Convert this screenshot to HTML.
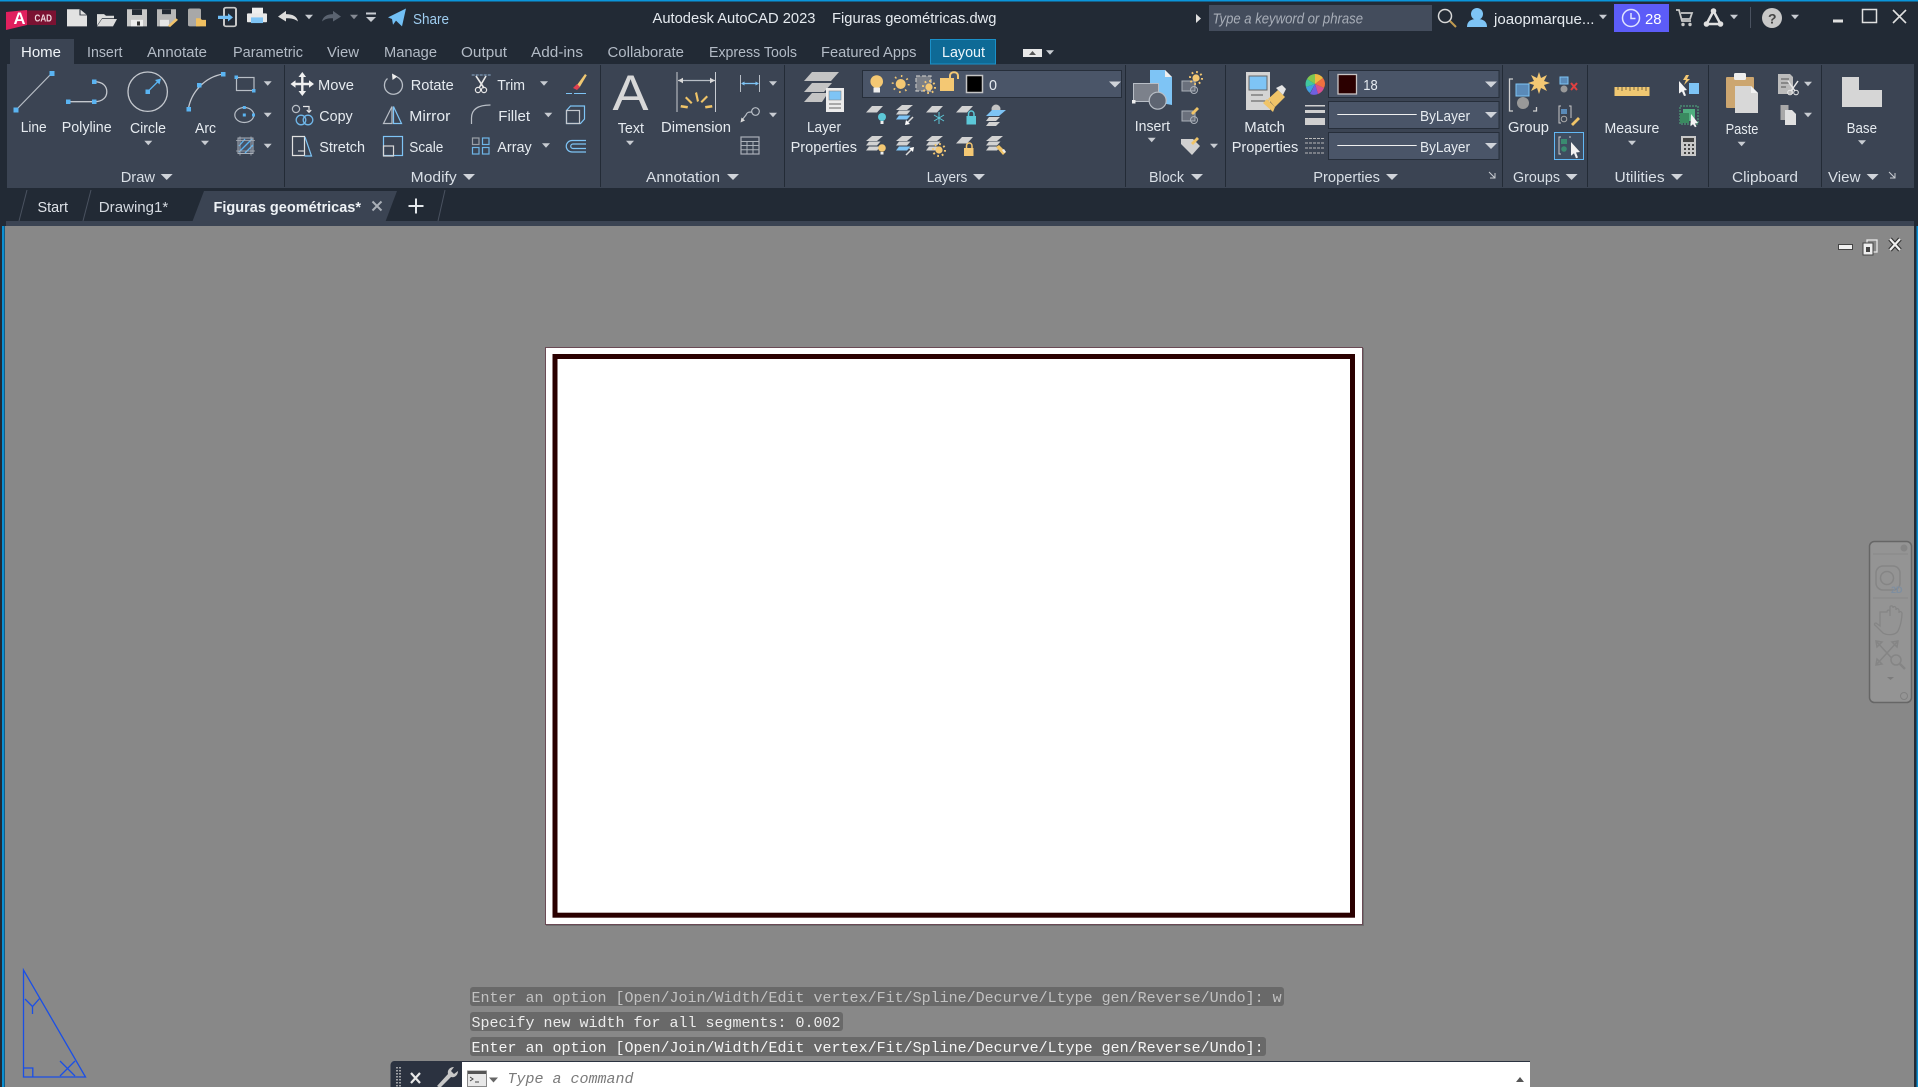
<!DOCTYPE html>
<html lang="en"><head><meta charset="utf-8"><title>Autodesk AutoCAD 2023 - Figuras geométricas.dwg</title>
<style>
html,body{margin:0;padding:0;background:#888;width:1918px;height:1087px;overflow:hidden}
svg{display:block}
text{font-family:"Liberation Sans",sans-serif;font-size:15px;fill:#e6ebf0}
.t{fill:#b3bbc6}
.m{font-family:"Liberation Mono",monospace;font-size:15px}
.p{fill:#d9dfe6}
</style></head><body>
<svg xmlns="http://www.w3.org/2000/svg" width="1918" height="1087" viewBox="0 0 1918 1087">
<defs>
<path id="c" d="M-4-2.2h8L0 2.2z" fill="#c8ccd2"/>
<path id="cb" d="M-6-3h12L0 3z" fill="#d0d4da"/>
<g id="slab"><path d="M6 0H17L11 6.5H0z" fill="#d2d2d2"/></g>
<g id="stack"><path d="M6 0H17L11 5H0z" fill="#d2d2d2"/><path d="M3 5.5H14.500L11 9.500H0z" fill="#d2d2d2"/><path d="M3 10.500H14.500L11 14.500H0z" fill="#d2d2d2"/></g>
<g id="stackb"><path d="M6 0H17L11 5H0z" fill="#d2d2d2"/><path d="M3 5.500H14.500L11 9.500H0z" fill="#d2d2d2"/><path d="M3 10.500H14.500L11 14.500H0z" fill="#7ec4f5"/></g>
<g id="sun"><circle r="3.600" fill="#f4c873"/><circle r="6" fill="none" stroke="#f4c873" stroke-width="2" stroke-dasharray="1.800 2.900"/></g>
</defs>

<!-- base -->
<rect width="1918" height="1087" fill="#888888"/>
<rect width="1918" height="226" fill="#222a35"/>
<rect x="0" y="0" width="1918" height="1.500" fill="#0a96dc"/>
<rect x="0" y="226" width="5" height="861" fill="#222a35"/>
<rect x="2" y="226" width="2.500" height="861" fill="#0a8fd2"/>
<rect x="1914" y="226" width="4" height="861" fill="#222a35"/>
<rect x="1916.500" y="226" width="1.500" height="861" fill="#0a8fd2"/>
<rect x="6" y="221" width="1908" height="5" fill="#3b4453"/>
<rect x="7" y="64" width="1907" height="124" fill="#3b4453"/>

<!-- logo -->
<path d="M6 12l21-2v15L6 30z" fill="#e0205e"/>
<text x="13.500" y="24" textLength="12" lengthAdjust="spacingAndGlyphs" style="font-size:17px;font-weight:bold;fill:#fff">A</text>
<rect x="27" y="10.500" width="29" height="14.500" fill="#7b1232"/>
<text x="34.500" y="21.500" textLength="17.500" lengthAdjust="spacingAndGlyphs" style="font-size:10.500px;font-weight:bold;fill:#f0d8de">CAD</text>

<!-- QAT -->
<g transform="translate(0 .4) scale(1 .81)">
<path d="M67 11h13l7 7v14H67z" fill="#e2e2e2"/><path d="M80 11v7h7" fill="none" stroke="#222a35"/>
<path d="M97 17h7l2 2h8v3h-12l-5 9zM102 23h15l-4 9H97z" fill="#dcdcdc"/>
<path d="M127 11h20v21h-20z" fill="#c8c8c8"/><rect x="132" y="11" width="10" height="7" fill="#222a35"/><rect x="131" y="24" width="12" height="8" fill="#eee"/><rect x="137" y="26" width="3" height="5" fill="#333"/>
<path d="M157 11h19v14l-6 7h-13z" fill="#b8b8b8"/><rect x="162" y="11" width="9" height="6" fill="#222a35"/><rect x="160" y="24" width="9" height="8" fill="#e6e6e6"/><path d="M168 31l8-9 2 2-8 9z" fill="#f2c46b"/>
<rect x="188" y="10" width="13" height="22" rx="2" fill="#a8a8a8"/><path d="M196 22h4l2 2h4v8h-10z" fill="#f0bf60"/>
<rect x="224" y="9" width="12" height="23" rx="2" fill="none" stroke="#c8c8c8" stroke-width="2"/><path d="M218 19h10v-3l5 5-5 5v-3h-10z" fill="#6fbdf5"/>
<rect x="252" y="9" width="11" height="8" fill="#eee"/><rect x="247" y="16" width="20" height="11" rx="1" fill="#e8e8e8"/><rect x="251" y="21" width="12" height="7" fill="#7ec4f5"/>
<path d="M278 20l8-7v4c7 0 11 3 12 9-3-3-6-4-12-4v4z" fill="#dcdcdc"/>
<path d="M341 20l-8-7v4c-6 0-10 3-11 9 3-3 5-4 11-4v4z" fill="#5a6370"/>
<path d="M388 21l18-11-4 22-6-7-3 5-1-7z" fill="#72c0f5"/>
</g>
<use href="#c" x="309" y="17"/>
<use href="#c" x="354" y="17" opacity=".6"/>
<rect x="366" y="12.500" width="10" height="2" fill="#c8ccd2"/><path d="M366 17h10l-5 5z" fill="#c8ccd2"/>
<text x="413" y="24" textLength="36" lengthAdjust="spacingAndGlyphs" style="fill:#9fcdf0">Share</text>

<!-- title -->
<text x="652.500" y="23" textLength="163" lengthAdjust="spacingAndGlyphs">Autodesk AutoCAD 2023</text>
<text x="832" y="23" textLength="164.500" lengthAdjust="spacingAndGlyphs">Figuras geométricas.dwg</text>
<path d="M1196 14l5 4.500-5 4.500z" fill="#e0e0e0"/>
<rect x="1209" y="5" width="223" height="26" fill="#434c5c"/>
<text x="1212.500" y="23.500" textLength="150.500" lengthAdjust="spacingAndGlyphs" style="font-style:italic;fill:#a8aeb8">Type a keyword or phrase</text>
<circle cx="1445" cy="16" r="6.500" fill="none" stroke="#d8d8d8" stroke-width="1.500"/><path d="M1450 21l6 6" stroke="#c09a50" stroke-width="2"/>
<circle cx="1477" cy="14" r="6" fill="#7ec4f5"/><path d="M1467 27c0-6 4-8 10-8s10 2 10 8z" fill="#7ec4f5"/>
<text x="1494" y="24" textLength="100.500" lengthAdjust="spacingAndGlyphs">joaopmarque...</text>
<use href="#c" x="1603" y="17"/>
<rect x="1614" y="4" width="55" height="28" fill="#5c5cf8"/>
<circle cx="1631" cy="18" r="8.500" fill="none" stroke="#e0e4ff" stroke-width="1.500"/><path d="M1631 13v5.500h4.500" fill="none" stroke="#e0e4ff" stroke-width="1.500"/>
<text x="1645" y="24" textLength="16.500" lengthAdjust="spacingAndGlyphs" style="fill:#fff">28</text>
<path d="M1676 10h3l3 11h9M1681 13h11l-2 6h-8" fill="none" stroke="#c8c8c8" stroke-width="1.800"/><circle cx="1683" cy="24.500" r="1.700" fill="#c8c8c8"/><circle cx="1690" cy="24.500" r="1.700" fill="#c8c8c8"/>
<path d="M1713.500 11l-7 13h14z" fill="none" stroke="#e0e0e0" stroke-width="2.500"/><circle cx="1713.500" cy="11" r="2.800" fill="#e0e0e0"/><circle cx="1706.500" cy="24" r="2.800" fill="#e0e0e0"/><circle cx="1720.500" cy="24" r="2.800" fill="#e0e0e0"/>
<use href="#c" x="1734" y="17"/>
<rect x="1750" y="7" width="1" height="21" fill="#4a5260"/>
<circle cx="1772" cy="18" r="10" fill="#c8c8c8"/><text x="1768" y="23.500" style="font-weight:bold;font-size:14px;fill:#444">?</text>
<use href="#c" x="1795" y="17"/>
<rect x="1833" y="19.500" width="10" height="3" fill="#e0e0e0"/>
<rect x="1862.500" y="9.500" width="14" height="13" fill="none" stroke="#e0e0e0" stroke-width="1.500"/>
<path d="M1893 10l13 13M1906 10l-13 13" stroke="#e0e0e0" stroke-width="1.600"/>

<!-- ribbon tabs -->
<rect x="10" y="39" width="64" height="25" fill="#3b4453"/>
<text x="21" y="57" textLength="40" lengthAdjust="spacingAndGlyphs" style="fill:#f0f4f8">Home</text>
<text class="t" x="87" y="57" textLength="35.500" lengthAdjust="spacingAndGlyphs">Insert</text>
<text class="t" x="147" y="57" textLength="60" lengthAdjust="spacingAndGlyphs">Annotate</text>
<text class="t" x="233" y="57" textLength="70" lengthAdjust="spacingAndGlyphs">Parametric</text>
<text class="t" x="327" y="57" textLength="32" lengthAdjust="spacingAndGlyphs">View</text>
<text class="t" x="384" y="57" textLength="53" lengthAdjust="spacingAndGlyphs">Manage</text>
<text class="t" x="461" y="57" textLength="46" lengthAdjust="spacingAndGlyphs">Output</text>
<text class="t" x="531" y="57" textLength="52" lengthAdjust="spacingAndGlyphs">Add-ins</text>
<text class="t" x="607.500" y="57" textLength="76.500" lengthAdjust="spacingAndGlyphs">Collaborate</text>
<text class="t" x="709" y="57" textLength="88" lengthAdjust="spacingAndGlyphs">Express Tools</text>
<text class="t" x="821" y="57" textLength="95.500" lengthAdjust="spacingAndGlyphs">Featured Apps</text>
<rect x="930.500" y="39.500" width="65" height="24.500" fill="#0e6a96" stroke="#1a90c8"/>
<text x="942" y="57" textLength="43" lengthAdjust="spacingAndGlyphs" style="fill:#eef6fb">Layout</text>
<rect x="1023" y="49" width="19" height="8" fill="#e8e8e8"/><path d="M1029 55l3.500-4 3.500 4z" fill="#555"/>
<use href="#c" x="1050" y="52.500"/>

<!-- separators -->
<g fill="#232b36">
<rect x="284" y="65" width="1" height="122"/><rect x="600" y="65" width="1" height="122"/><rect x="784" y="65" width="1" height="122"/><rect x="1125" y="65" width="1" height="122"/><rect x="1225" y="65" width="1" height="122"/><rect x="1502" y="65" width="1" height="122"/><rect x="1587" y="65" width="1" height="122"/><rect x="1708" y="65" width="1" height="122"/><rect x="1821" y="65" width="1" height="122"/>
</g>

<!-- Draw panel -->
<path d="M16 110L52 73" stroke="#b8bec6" stroke-width="1.200"/>
<g fill="#5ab4f2"><rect x="13.500" y="107.500" width="5" height="5"/><rect x="49.500" y="71" width="5" height="5"/></g>
<path d="M68 101.700H94.300M94.300 81.700c9 0 12.500 5 12.500 10s-3.500 10-12.500 10" fill="none" stroke="#c4c8ce" stroke-width="1.300"/>
<g fill="#5ab4f2"><rect x="66" y="99.500" width="4.500" height="4.500"/><rect x="92" y="99.500" width="4.500" height="4.500"/><rect x="92" y="79.500" width="4.500" height="4.500"/></g>
<circle cx="147.700" cy="91.700" r="19.700" fill="none" stroke="#c4c8ce" stroke-width="1.300"/>
<path d="M147.700 91.700L159 80.500" stroke="#5ab4f2" stroke-width="1.300"/><path d="M161 78.500l-1.500 6-4.500-4.500z" fill="#5ab4f2"/><rect x="145.500" y="89.500" width="4.500" height="4.500" fill="#5ab4f2"/>
<path d="M188.300 109.300C191 92 205 77 223 74" fill="none" stroke="#c4c8ce" stroke-width="1.300"/>
<g fill="#5ab4f2"><rect x="186.500" y="107" width="4.500" height="4.500"/><rect x="197" y="83" width="4.500" height="4.500"/><rect x="221" y="72" width="4.500" height="4.500"/></g>
<rect x="236.500" y="77.500" width="17.500" height="13" fill="none" stroke="#b8bec6" stroke-width="1.200"/>
<rect x="234.500" y="75.500" width="3.500" height="3.500" fill="#5ab4f2"/><rect x="252" y="89" width="3.500" height="3.500" fill="#5ab4f2"/>
<ellipse cx="244.300" cy="115" rx="9.500" ry="7.500" fill="none" stroke="#b8bec6" stroke-width="1.200"/>
<g fill="#5ab4f2"><rect x="242.800" y="106" width="3" height="3"/><rect x="242.800" y="113.500" width="3" height="3"/><rect x="252" y="113.500" width="3" height="3"/></g>
<rect x="238" y="138" width="15" height="15.500" fill="#4a5568" stroke="#aab0b8"/><path d="M239 146l6-7M239 152l13-13M245 153l8-8" stroke="#5ab4f2" stroke-width="1.300"/>
<path d="M236 140.500h19M236 151h19M240 136.500v19M251 136.500v19" stroke="#aab0b8" stroke-width=".8"/>
<use href="#c" x="267.700" y="83.500"/><use href="#c" x="267.700" y="115"/><use href="#c" x="267.700" y="146"/>
<text x="20.700" y="132" textLength="26" lengthAdjust="spacingAndGlyphs">Line</text>
<text x="61.700" y="132" textLength="50" lengthAdjust="spacingAndGlyphs">Polyline</text>
<text x="130" y="133" textLength="36" lengthAdjust="spacingAndGlyphs">Circle</text>
<text x="195" y="133" textLength="21" lengthAdjust="spacingAndGlyphs">Arc</text>
<use href="#c" x="148.300" y="143"/><use href="#c" x="205" y="143"/>
<text class="p" x="120.700" y="182" textLength="34.300" lengthAdjust="spacingAndGlyphs">Draw</text><use href="#cb" x="166.700" y="177"/>

<!-- Modify panel -->
<g stroke="#f0f0f0" stroke-width="2.400" fill="#f0f0f0"><path d="M292.500 84h19.500M302.300 74.500V94" fill="none"/></g>
<path d="M302.300 72l-3.800 5h7.600zM302.300 96l-3.800-5h7.600zM290.500 84l5-3.800v7.600zM314 84l-5-3.800v7.600z" fill="#f0f0f0"/>
<path d="M397 77a9 9 0 1 1-9.500 1.500" fill="none" stroke="#b8bec6" stroke-width="1.300"/><path d="M392 73.500l5.500 3-5 3.500z" fill="#eee"/>
<path d="M471.700 75h19" stroke="#7c98b4" stroke-width="1.300" stroke-dasharray="3 1"/><path d="M476 76l8 12M486 76l-7 12" stroke="#e8e8e8" stroke-width="1.600"/><circle cx="478" cy="90" r="2.600" fill="none" stroke="#e8e8e8" stroke-width="1.200"/><circle cx="484" cy="90" r="2.600" fill="none" stroke="#e8e8e8" stroke-width="1.200"/>
<path d="M577 85l8-11 1.800 1.200-7 11.800z" fill="#f0c872"/><path d="M573 88l4-4 3 3-3 3z" fill="#e04050"/><path d="M566 93.500h6M574 93.500h12" stroke="#7ec4f5" stroke-width="1"/>
<circle cx="296" cy="109" r="3.600" fill="none" stroke="#b8bec6" stroke-width="1.200"/><path d="M303 106.500h6v6M309 112.500l-2.200-2.500M309 112.500l2.200-2.500" fill="none" stroke="#e8e8e8" stroke-width="1.200"/>
<circle cx="301" cy="120" r="4.800" fill="none" stroke="#6fb6e8" stroke-width="1.300"/><circle cx="308" cy="120" r="4.800" fill="none" stroke="#6fb6e8" stroke-width="1.300"/>
<path d="M392 106.500v17h-8.500z" fill="none" stroke="#b8bec6" stroke-width="1.200"/><path d="M393.500 106.500v17h8z" fill="none" stroke="#7ec4f5" stroke-width="1.200"/>
<path d="M471.500 124v-6c0-8 5-13 19-13" fill="none" stroke="#b8bec6" stroke-width="1.200"/>
<path d="M566.500 110.500l4-4.500h14v13l-4 4.500h-14z" fill="none" stroke="#7ec4f5" stroke-width="1.200"/><rect x="566.500" y="110.500" width="13" height="13" fill="none" stroke="#c4c8ce" stroke-width="1.200"/>
<path d="M292.500 136.500h12v19h-12z" fill="none" stroke="#e0e0e0" stroke-width="1.200"/><path d="M305 137l6.500 19h-7" fill="none" stroke="#7ec4f5" stroke-width="1.200"/><path d="M298 151h6" stroke="#eee"/>
<rect x="383.500" y="136.500" width="19" height="19" fill="none" stroke="#7ec4f5" stroke-width="1.200"/><rect x="383.500" y="146" width="10" height="10" fill="none" stroke="#d8d8d8" stroke-width="1.200"/>
<g fill="none" stroke-width="1.200"><rect x="472.500" y="138" width="6.500" height="6.500" stroke="#9aa0a8"/><rect x="482.500" y="138" width="6.500" height="6.500" stroke="#6fb6e8"/><rect x="472.500" y="147.500" width="6.500" height="6.500" stroke="#6fb6e8"/><rect x="482.500" y="147.500" width="6.500" height="6.500" stroke="#6fb6e8"/></g>
<path d="M586 140.500h-14a5.500 5.500 0 0 0 0 11.500h14M586 144h-13a2.200 2.200 0 0 0 0 4.500h13" fill="none" stroke="#7ec4f5" stroke-width="1.200"/>
<text x="318" y="90" textLength="36" lengthAdjust="spacingAndGlyphs">Move</text>
<text x="410.700" y="90" textLength="43" lengthAdjust="spacingAndGlyphs">Rotate</text>
<text x="497.300" y="90" textLength="27.700" lengthAdjust="spacingAndGlyphs">Trim</text>
<text x="319.300" y="121" textLength="33.400" lengthAdjust="spacingAndGlyphs">Copy</text>
<text x="409.300" y="121" textLength="41" lengthAdjust="spacingAndGlyphs">Mirror</text>
<text x="498.300" y="121" textLength="31.700" lengthAdjust="spacingAndGlyphs">Fillet</text>
<text x="319.300" y="152" textLength="45.700" lengthAdjust="spacingAndGlyphs">Stretch</text>
<text x="409.300" y="152" textLength="34" lengthAdjust="spacingAndGlyphs">Scale</text>
<text x="497.300" y="152" textLength="34.400" lengthAdjust="spacingAndGlyphs">Array</text>
<use href="#c" x="544" y="83.500"/><use href="#c" x="548.300" y="115"/><use href="#c" x="546" y="145.500"/>
<text class="p" x="410.700" y="182" textLength="46" lengthAdjust="spacingAndGlyphs">Modify</text><use href="#cb" x="469" y="177"/>

<!-- Annotation -->
<text x="612.500" y="110" textLength="36" lengthAdjust="spacingAndGlyphs" style="font-size:50px;fill:#d8d8d8">A</text>
<text x="617.700" y="133" textLength="26.300" lengthAdjust="spacingAndGlyphs">Text</text><use href="#c" x="630" y="143"/>
<path d="M677 72v40M715.500 72v40" stroke="#c8ccd2" stroke-width="1"/><path d="M678 80.500h37" stroke="#b8bec6" stroke-width="1.200"/><path d="M678 80.500l5-2.800v5.600zM715 80.500l-5-2.800v5.600z" fill="#d8d8d8"/>
<g fill="#f0c468"><path d="M695 93l2-1 2 9-2 1zM685 98l1.500-1.500 6 6-1.500 1.500zM708 97l-1.500-1.500-6 6 1.500 1.500zM681 105l7 1-.5 2.500-7-1zM712 105l-7 1 .5 2.500 7-1z"/></g>
<text x="661" y="132" textLength="70" lengthAdjust="spacingAndGlyphs">Dimension</text>
<path d="M740.500 75v17M759.500 75v17" stroke="#b8bec6"/><path d="M742 83.500h16" stroke="#7ec4f5" stroke-width="1.300"/><path d="M741 83.500l3.500-2v4zM759 83.500l-3.500-2v4z" fill="#7ec4f5"/>
<path d="M742 120l4-5c1-3 3-3 6-3" fill="none" stroke="#b8bec6" stroke-width="1.200"/><circle cx="755.500" cy="111.500" r="3.800" fill="none" stroke="#b8bec6" stroke-width="1.200"/><path d="M740.500 122.500l1-5 3.500 3z" fill="#d8d8d8"/>
<rect x="741" y="137" width="18" height="17" fill="none" stroke="#aab0b8" stroke-width="1.200"/><path d="M741 141.500h18M741 145.500h18M741 149.800h18M747 141.500V154M753 141.500V154" stroke="#aab0b8" stroke-width="1"/>
<use href="#c" x="773" y="83.500"/><use href="#c" x="773" y="115"/>
<text class="p" x="646" y="182" textLength="74" lengthAdjust="spacingAndGlyphs">Annotation</text><use href="#cb" x="733" y="177"/>

<!-- Layers -->
<path d="M812 72h27l-8 9h-27z" fill="#c4c4c4"/><path d="M812 83h20l-8 9h-20z" fill="#c4c4c4"/><path d="M812 93h16l-6 9h-18z" fill="#c4c4c4"/>
<rect x="826" y="88" width="18" height="24" fill="#ececec"/><rect x="829" y="91" width="12" height="9" fill="#7ec4f5" stroke="#888" stroke-width=".6"/><path d="M829 104h12M829 108h12" stroke="#666"/>
<text x="807" y="132" textLength="34" lengthAdjust="spacingAndGlyphs">Layer</text>
<text x="790.600" y="152" textLength="66.400" lengthAdjust="spacingAndGlyphs">Properties</text>
<rect x="862.500" y="70.500" width="259" height="27" fill="#4a5568" stroke="#262e3a"/>
<circle cx="876.700" cy="81.500" r="6.300" fill="#f4c873"/><rect x="873.500" y="87.500" width="6.500" height="5" fill="#eee"/>
<circle cx="900.700" cy="84" r="5" fill="#f4c873"/><circle cx="900.700" cy="84" r="8" fill="none" stroke="#f4c873" stroke-width="2" stroke-dasharray="1.500 4.780"/>
<rect x="916" y="76" width="15" height="15" fill="#7a7f88" stroke="#c0c0c0" stroke-width="1.200" stroke-dasharray="4 2"/><use href="#sun" x="929" y="87"/>
<path d="M950 79v-3c0-5 8-5 8 0v3" fill="none" stroke="#f4c873" stroke-width="2"/><rect x="940" y="78" width="14" height="13" fill="#f4c873"/>
<rect x="966.500" y="75.500" width="16" height="17" fill="#000" stroke="#c4c4c4" stroke-width="1.500"/>
<text x="989" y="90" textLength="8" lengthAdjust="spacingAndGlyphs">0</text>
<use href="#cb" x="1115" y="84.500"/>
<!-- row 1 -->
<use href="#slab" x="866" y="106"/><circle cx="882" cy="117" r="4" fill="#5cc8d8"/><rect x="880.500" y="121" width="3" height="3" fill="#eee"/>
<use href="#stackb" x="896" y="105"/><path d="M906 124l7-7" stroke="#ddd" stroke-width="1.500"/><path d="M905 125l1-5 4 4z" fill="#fff"/>
<use href="#slab" x="926" y="106"/><path d="M939 112v12M934 115l10 6M944 115l-10 6" stroke="#5cc8d8" stroke-width="1"/>
<use href="#slab" x="956" y="106"/><path d="M968.500 116v-2c0-4 5.500-4 5.500 0v2" fill="none" stroke="#5cc8d8" stroke-width="1.500"/><rect x="966.500" y="116" width="9.500" height="8.500" fill="#5cc8d8"/>
<circle cx="996" cy="109" r="4.500" fill="#c4c4c4"/><path d="M992 110H1006L999 116H986z" fill="#7ec4f5"/><path d="M989 117H1000L996 121H986zM989 122H1000L996 126H986z" fill="#d2d2d2"/>
<!-- row 2 -->
<use href="#stack" x="866" y="136"/><circle cx="882" cy="148" r="3.800" fill="#f4c873"/><rect x="880.500" y="152" width="3" height="2.500" fill="#eee"/>
<use href="#stackb" x="896" y="136"/><path d="M906 155l7-7" stroke="#ddd" stroke-width="1.500"/><path d="M914 147l-1 5-4-4z" fill="#fff"/>
<use href="#stack" x="926" y="136"/><use href="#sun" x="939" y="150"/>
<use href="#slab" x="956" y="137"/><path d="M966.500 148v-2c0-4 5.500-4 5.500 0v2" fill="none" stroke="#f4c873" stroke-width="1.500"/><rect x="964" y="148" width="9.500" height="8" fill="#f4c873"/>
<use href="#stack" x="986" y="136"/><path d="M996 147l3-2 7 7-3 3z" fill="#f0c468"/><path d="M1002 150l2 3 2-1-2-3z" fill="#eee"/>
<text class="p" x="926.700" y="182" textLength="40.600" lengthAdjust="spacingAndGlyphs">Layers</text><use href="#cb" x="979" y="177"/>

<!-- Block -->
<path d="M1150 70h15l7 7v28l-22-4z" fill="#7ec4f5"/><path d="M1165 70v7h7" fill="#eee"/>
<rect x="1133.500" y="83.500" width="25" height="18" fill="#7c818b" stroke="#b8bec6"/><circle cx="1157.700" cy="100.700" r="8.500" fill="#5e6572" stroke="#b8bec6" stroke-width="1.200"/><rect x="1132" y="100" width="3.500" height="3.500" fill="#eee"/>
<text x="1134.700" y="131" textLength="35.300" lengthAdjust="spacingAndGlyphs">Insert</text><use href="#c" x="1151.700" y="140"/>
<rect x="1182" y="81" width="13" height="10" fill="#6a707c" stroke="#aab0b8"/><circle cx="1194" cy="90" r="3.500" fill="none" stroke="#aab0b8"/><use href="#sun" x="1196" y="78"/>
<rect x="1182" y="111" width="13" height="10" fill="#6a707c" stroke="#aab0b8"/><circle cx="1194" cy="120" r="3.500" fill="none" stroke="#aab0b8"/><path d="M1191 113l6-6 2 2-6 6z" fill="#f0c468"/>
<path d="M1181 139h12l7 7-8 9-11-11z" fill="#d0d0d0"/><path d="M1191 143l6-6 2 2-6 6z" fill="#f0c468"/>
<use href="#c" x="1214" y="146"/>
<text class="p" x="1149" y="182" textLength="35" lengthAdjust="spacingAndGlyphs">Block</text><use href="#cb" x="1197" y="177"/>

<!-- Properties -->
<path d="M1246 72h24v38h-24z" fill="#d4d4d4"/><rect x="1249" y="76" width="18" height="14" fill="#7ec4f5" stroke="#666"/><path d="M1251 95h12M1251 101h18" stroke="#555"/>
<path d="M1268 99l10-9 7 7-10 10z" fill="#f0c468"/><path d="M1276 88l6-3 4 4-3 6z" fill="#e4e4e4"/><path d="M1267 99l8 8-2 5-10-9z" fill="#f0c468"/>
<text x="1244.300" y="132" textLength="40.700" lengthAdjust="spacingAndGlyphs">Match</text>
<text x="1231.700" y="152" textLength="66.600" lengthAdjust="spacingAndGlyphs">Properties</text>
<path d="M1315 84V74a10 10 0 0 1 8 4z" fill="#f0b840"/><path d="M1315 84l8-6a10 10 0 0 1 1 10z" fill="#f07040"/><path d="M1315 84l9 4a10 10 0 0 1-6 6z" fill="#d85090"/><path d="M1315 84l3 10a10 10 0 0 1-8 0z" fill="#7060e0"/><path d="M1315 84l-5 9a10 10 0 0 1-4-6z" fill="#40a0e0"/><path d="M1315 84l-9 3a10 10 0 0 1 1-8z" fill="#40c8a0"/><path d="M1315 84l-8-5a10 10 0 0 1 8-5z" fill="#80c850"/>
<rect x="1305" y="105" width="20" height="1.500" fill="#d0d0d0"/><rect x="1305" y="110" width="20" height="3" fill="#d0d0d0"/><rect x="1305" y="118" width="20" height="7" fill="#d0d0d0"/>
<path d="M1305 138.500h20M1305 143h20M1305 148h20M1305 153h20" stroke="#b8b8b8" stroke-width="1" stroke-dasharray="3 1"/>
<g fill="#4a5568" stroke="#262e3a"><rect x="1328.500" y="70.500" width="170.500" height="27"/><rect x="1328.500" y="101.500" width="170.500" height="27"/><rect x="1328.500" y="132.500" width="170.500" height="27"/></g>
<rect x="1338" y="74.500" width="18.500" height="19.500" fill="#2b0000" stroke="#c8c4c4" stroke-width="1.300"/>
<text x="1363.300" y="90" textLength="14.400" lengthAdjust="spacingAndGlyphs">18</text>
<path d="M1337.300 114.500h79.400M1337.300 145.500h79.400" stroke="#f0f0f0" stroke-width="1"/>
<text x="1420" y="121" textLength="50" lengthAdjust="spacingAndGlyphs">ByLayer</text>
<text x="1420" y="152" textLength="50" lengthAdjust="spacingAndGlyphs">ByLayer</text>
<use href="#cb" x="1491" y="84.500"/><use href="#cb" x="1491" y="115"/><use href="#cb" x="1491" y="146"/>
<text class="p" x="1313.300" y="182" textLength="66.700" lengthAdjust="spacingAndGlyphs">Properties</text><use href="#cb" x="1392" y="177"/>
<path d="M1489 172l6 6M1490 178h5v-5" fill="none" stroke="#c8ccd2"/>

<!-- Groups -->
<path d="M1513 79h-3.500v32h3.500M1533 111h3.500v-4" fill="none" stroke="#d0d0d0" stroke-width="1.300"/>
<rect x="1516" y="84" width="13" height="12" fill="#5a8ab8" stroke="#7ec4f5"/><circle cx="1523" cy="103" r="6" fill="#999"/>
<path d="M1539 72l2 6 6-3-3 6 6 2-6 2 3 6-6-3-2 6-2-6-6 3 3-6-6-2 6-2-3-6 6 3z" fill="#f4c873"/>
<text x="1508" y="132" textLength="41" lengthAdjust="spacingAndGlyphs">Group</text>
<rect x="1560" y="77" width="8" height="7" fill="#5a8ab8" stroke="#7ec4f5"/><circle cx="1564" cy="89" r="3.500" fill="#999"/><path d="M1571 83l6 7M1577 83l-6 7" stroke="#e04040" stroke-width="2"/>
<path d="M1561 106h-2v17h2M1569 106h2v12" fill="none" stroke="#c8c8c8"/><rect x="1561" y="109" width="6" height="5" fill="#5a8ab8"/><circle cx="1564" cy="119" r="2.800" fill="none" stroke="#aaa"/><path d="M1571 124l7-7 2 2-7 7z" fill="#f0c468"/>
<rect x="1554.500" y="132.500" width="29" height="27" fill="#3f4d60" stroke="#62b8f5"/>
<path d="M1561 137h-2v17h2M1569 137h2" fill="none" stroke="#c8c8c8"/><rect x="1561" y="139" width="6" height="5" fill="#3a8a70"/><circle cx="1564" cy="149" r="2.800" fill="#3a8a70"/><path d="M1571 142l9 10-4 .5 2 5-2 .8-2-5-3 2.500z" fill="#f2f2f2"/>
<text class="p" x="1513" y="182" textLength="47" lengthAdjust="spacingAndGlyphs">Groups</text><use href="#cb" x="1571.600" y="177"/>

<!-- Utilities -->
<rect x="1614.500" y="87" width="35" height="9" fill="#f0c872"/><path d="M1618 87v3M1622 87v4M1626 87v3M1630 87v4M1634 87v3M1638 87v4M1642 87v3M1646 87v4" stroke="#7a6840" stroke-width="1"/>
<text x="1604.500" y="133" textLength="54.900" lengthAdjust="spacingAndGlyphs">Measure</text><use href="#c" x="1632" y="143"/>
<path d="M1679 81l8 9-3 .5 2 5-2 .5-2-4.500-3 2z" fill="#f4f4f4"/><path d="M1686 75l-3 5h3l-2 5 6-6h-3l2-4z" fill="#f4c873"/><rect x="1689" y="83" width="10" height="11" fill="#7ec4f5"/>
<rect x="1680" y="106" width="18" height="18" fill="none" stroke="#50b080" stroke-dasharray="2 1"/><rect x="1683" y="109" width="12" height="12" fill="#50b080"/><rect x="1680" y="113" width="9" height="10" fill="#3a8a60"/><path d="M1691 114l7 9-3 .5 1.500 3-1.500.8-2-3-2.500 2z" fill="#f4f4f4"/>
<rect x="1681" y="136" width="15" height="20" fill="#c8c8c8"/><rect x="1683" y="138" width="11" height="4" fill="#444"/><path d="M1684 145h2M1688 145h2M1692 145h2M1684 149h2M1688 149h2M1692 149h2M1684 153h2M1688 153h2M1692 153h2" stroke="#444" stroke-width="2"/>
<text class="p" x="1614.500" y="182" textLength="50.100" lengthAdjust="spacingAndGlyphs">Utilities</text><use href="#cb" x="1677" y="177"/>

<!-- Clipboard -->
<rect x="1726" y="77" width="28" height="31" rx="1" fill="#cca670"/><rect x="1734" y="73" width="12" height="7" rx="1.500" fill="#eee"/>
<path d="M1735 86h16l7 7v20h-23z" fill="#d8d8d8"/><path d="M1751 86v7h7" fill="#f2f2f2"/>
<text x="1725.600" y="134" textLength="32.800" lengthAdjust="spacingAndGlyphs">Paste</text><use href="#c" x="1741.600" y="144"/>
<path d="M1778 74h12l3 3v17h-15z" fill="#bcbcbc"/><path d="M1781 79h8M1781 83h8M1781 87h5" stroke="#555"/>
<path d="M1788 81l7 10M1798 81l-7 10" stroke="#e8e8e8" stroke-width="1.500"/><circle cx="1790" cy="92.500" r="2.300" fill="none" stroke="#e8e8e8"/><circle cx="1796" cy="92.500" r="2.300" fill="none" stroke="#e8e8e8"/>
<use href="#c" x="1808" y="84"/>
<path d="M1780.500 105h8v15h-8z" fill="#a8a8a8"/><path d="M1785 110h7l4 4v11h-11z" fill="#e0e0e0"/>
<use href="#c" x="1808" y="115"/>
<text class="p" x="1732" y="182" textLength="66" lengthAdjust="spacingAndGlyphs">Clipboard</text>

<!-- View -->
<path d="M1842 77h17v13h23v17h-40z" fill="#d6d6d6"/>
<text x="1846.600" y="133" textLength="30.400" lengthAdjust="spacingAndGlyphs">Base</text><use href="#c" x="1862" y="142.500"/>
<text class="p" x="1828" y="182" textLength="32.500" lengthAdjust="spacingAndGlyphs">View</text><use href="#cb" x="1872.600" y="177"/>
<path d="M1889 172l6 6M1890 178h5v-5" fill="none" stroke="#c8ccd2"/>

<!-- file tabs -->
<path d="M19 221l8-31M83 221l8-31" stroke="#4a5260" stroke-width="1"/>
<text x="37.500" y="212" textLength="30.500" lengthAdjust="spacingAndGlyphs" style="fill:#e0e4ea">Start</text>
<text x="98.800" y="212" textLength="69.500" lengthAdjust="spacingAndGlyphs" style="fill:#d4d9e0">Drawing1*</text>
<path d="M204 191H397L385.700 221H192.600z" fill="#3b4453"/>
<text x="213.500" y="212" textLength="147.500" lengthAdjust="spacingAndGlyphs" style="font-weight:bold;fill:#eef2f6">Figuras geométricas*</text>
<path d="M372.500 201.500l9 9M381.500 201.500l-9 9" stroke="#aab0b8" stroke-width="2"/>
<path d="M408.500 206h15M416 198.500v15" stroke="#e4e8ec" stroke-width="2"/>
<path d="M438 221l7-31" stroke="#4a5260" stroke-width="1"/>

<!-- viewport controls -->
<rect x="1838.500" y="244.500" width="14" height="5" fill="#f0f0f0" stroke="#444"/>
<rect x="1867" y="240" width="10" height="12" fill="#888" stroke="#e8e8e8" stroke-width="1.300"/><rect x="1863" y="243" width="10" height="12" fill="#eee" stroke="#444"/><rect x="1866" y="247" width="4" height="5" fill="#444"/>
<path d="M1890 239l10 11M1900 239l-10 11" stroke="#333" stroke-width="4.500"/><path d="M1890 239l10 11M1900 239l-10 11" stroke="#f0f0f0" stroke-width="2.200"/>

<!-- paper -->
<rect x="546" y="348" width="818" height="578" fill="#6e6e6e"/>
<rect x="545.500" y="347.500" width="817" height="577" fill="#fff" stroke="#6a4a55"/>
<rect x="555" y="356.500" width="797.500" height="558.700" fill="#fff" stroke="#2b0000" stroke-width="5"/>

<!-- nav bar -->
<rect x="1869.500" y="541.500" width="42" height="161" rx="5" fill="#949494" stroke="#666" stroke-width="1.500"/>
<path d="M1873 554h35M1873 598h35" stroke="#888"/>
<circle cx="1904" cy="548" r="3.500" fill="#858585"/>
<rect x="1876" y="566" width="24" height="24" rx="7" fill="none" stroke="#858585" stroke-width="1.500"/><circle cx="1887" cy="578" r="6.500" fill="none" stroke="#858585" stroke-width="1.500"/>
<text x="1891" y="593" style="font-size:9px;font-weight:bold;fill:#7e8ea0">2D</text>
<path d="M1880 612v14l-4-3c-2 0-2 2 0 3l7 7c3 2 12 3 15-2 3-6 4-14 4-18-1-2-3-2-3 0v-3c-1-2-3-2-3 0v-2c-1-2-3-2-3 0v-1c-1-2-3-1-3 0v9-4c0-2-3-3-3 0z" fill="none" stroke="#858585" stroke-width="1.300"/>
<path d="M1876 641l22 24M1898 641l-22 24M1876 641l6 1-5 5zM1898 641l-6 1 5 5zM1876 665l6-1-5-5z" fill="none" stroke="#858585" stroke-width="1.500"/>
<circle cx="1896" cy="660" r="5" fill="#949494" stroke="#858585" stroke-width="1.500"/><path d="M1900 664l5 5" stroke="#858585" stroke-width="2.500"/>
<path d="M1887 677h7l-3.500 3z" fill="#7c7c7c"/>
<circle cx="1904" cy="696" r="3.500" fill="none" stroke="#808080"/>

<!-- UCS -->
<g fill="none" stroke="#1a4fe6" stroke-width="1.300">
<path d="M23.500 970V1077H85.500z"/><path d="M23.500 1068h9.300v9"/>
<path d="M25 999l7.500 7.500L40 998M32.500 1006.500V1014"/>
<path d="M60 1076l15-15M60 1061l15 15"/>
</g>

<!-- command history -->
<g fill="#696969"><rect x="470" y="987" width="814" height="19" rx="3"/><rect x="470" y="1012" width="373" height="19" rx="3"/><rect x="470" y="1037" width="796" height="19" rx="3"/></g>
<text class="m" x="471.500" y="1002" style="fill:#c2c2c2">Enter an option [Open/Join/Width/Edit vertex/Fit/Spline/Decurve/Ltype gen/Reverse/Undo]: w</text>
<text class="m" x="471.500" y="1027" style="fill:#ececec">Specify new width for all segments: 0.002</text>
<text class="m" x="471.500" y="1052" style="fill:#f4f4f4">Enter an option [Open/Join/Width/Edit vertex/Fit/Spline/Decurve/Ltype gen/Reverse/Undo]:</text>

<!-- command bar -->
<path d="M394 1061H1530V1087H390.500V1065a4 4 0 0 1 3.500-4z" fill="#2b3240"/>
<rect x="462" y="1062" width="1068" height="25" fill="#fff"/>
<path d="M397 1067v20M400 1067v20" stroke="#c8c8c8" stroke-width="1.500" stroke-dasharray="1.500 1.500"/>
<path d="M411 1073l9 10M420 1073l-9 10" stroke="#e8e8e8" stroke-width="2.200"/>
<path d="M437 1086l11-12c-1-4 2-7 6-7l-3 4 3 3 4-3c0 4-3 7-7 6l-11 11z" fill="#c8c8c8"/>
<rect x="467.500" y="1071" width="19" height="15.500" fill="#e8e8e8" stroke="#888"/><rect x="468" y="1071" width="18" height="3" fill="#555"/>
<path d="M470 1077l3 2-3 2M475 1082h4" fill="none" stroke="#444"/>
<path d="M489 1077.500h9l-4.500 5z" fill="#666"/>
<text class="m" x="507.500" y="1083" style="font-style:italic;fill:#7a7a7a">Type a command</text>
<path d="M1516 1082l4-5 4 5z" fill="#555"/>
</svg>
</body></html>
